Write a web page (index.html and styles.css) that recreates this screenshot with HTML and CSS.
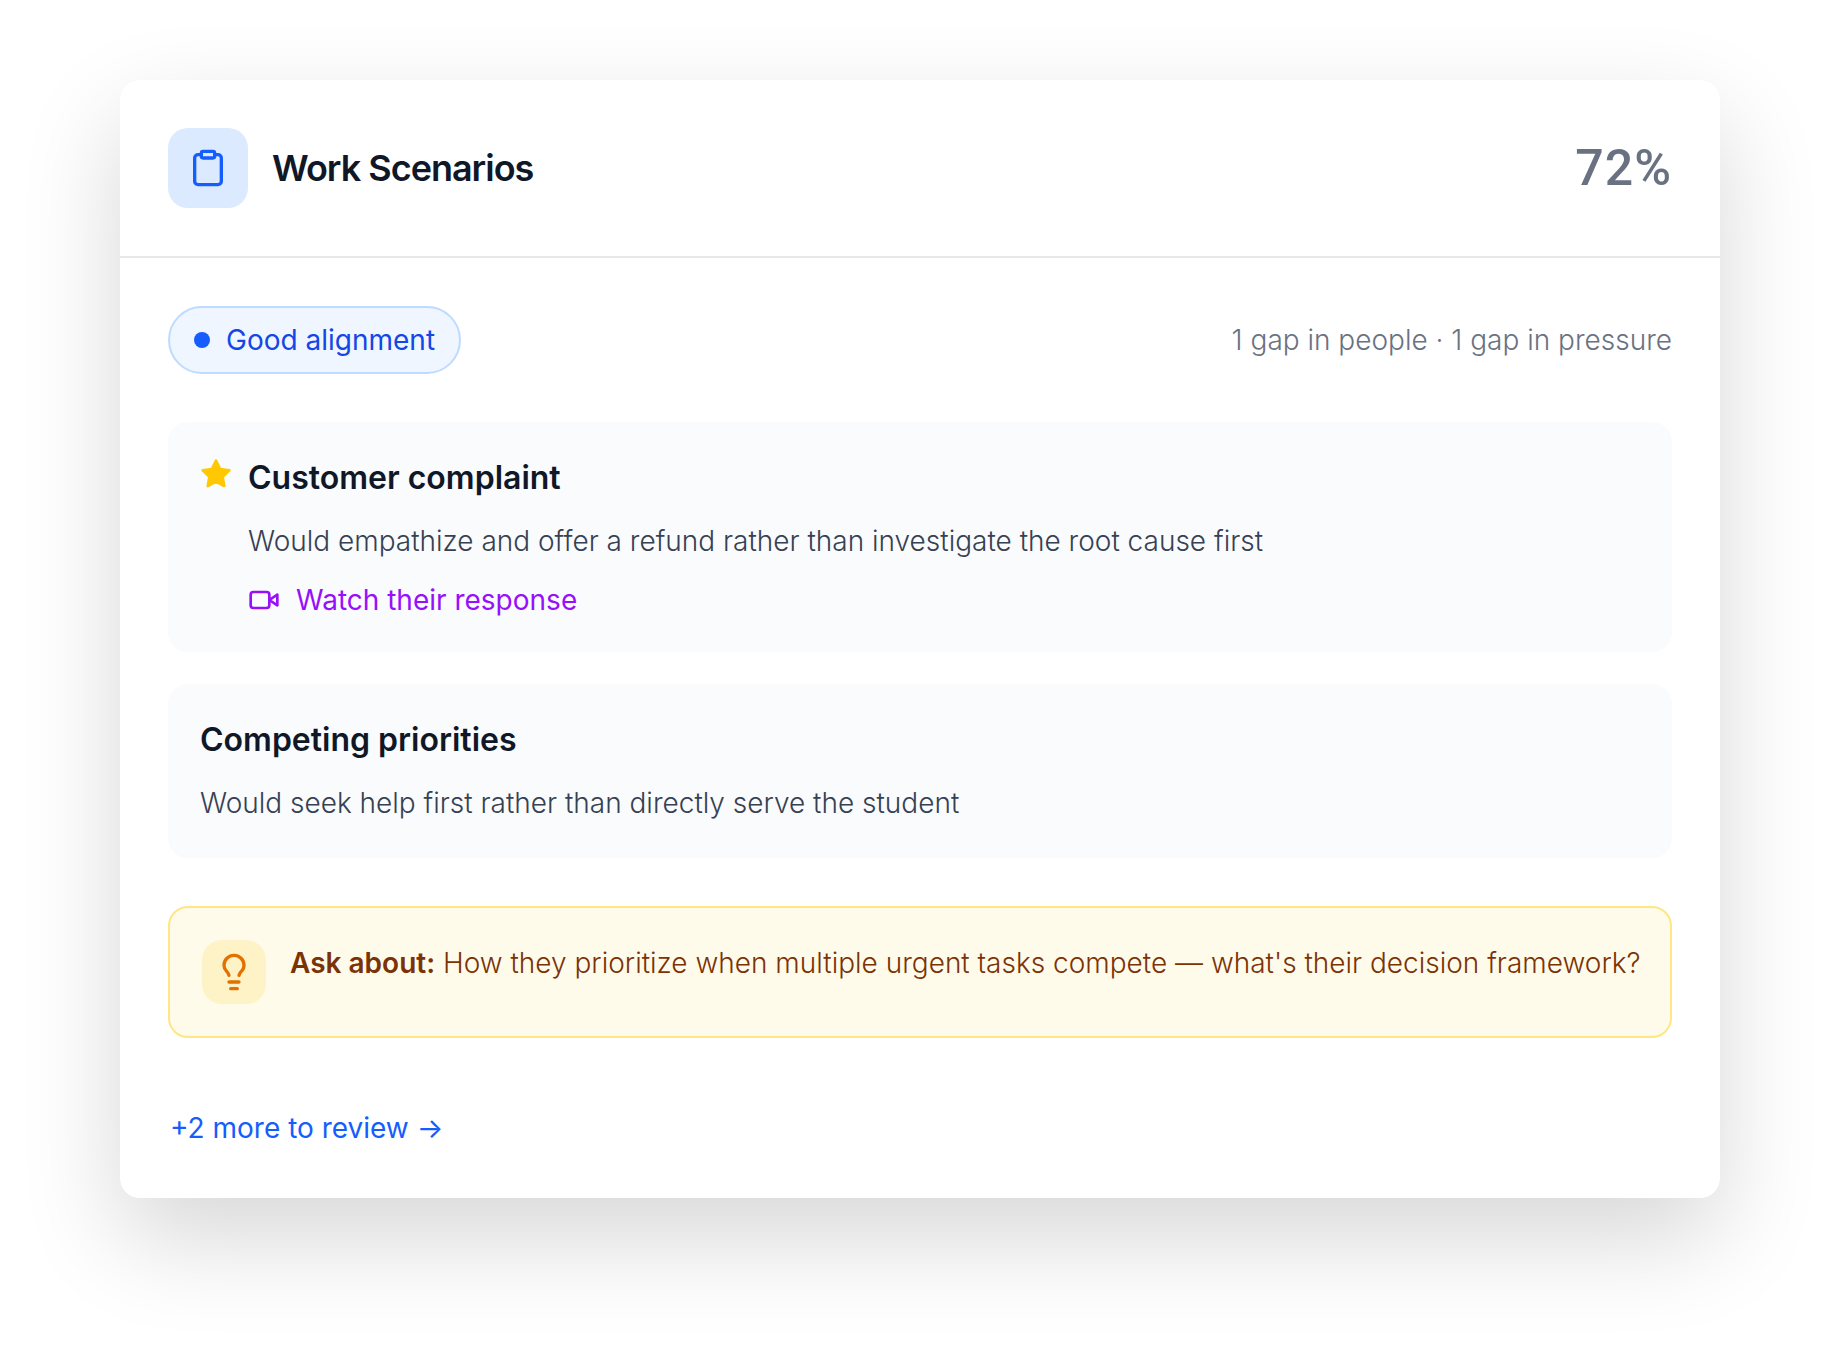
FILE: index.html
```html
<!DOCTYPE html>
<html lang="en">
<head>
<meta charset="utf-8">
<meta name="viewport" content="width=device-width, initial-scale=1">
<title>Work Scenarios</title>
<link rel="stylesheet" href="styles.css">
</head>
<body>
<main class="card">
  <header class="card-header">
    <span class="header-icon">
      <svg class="icon-clipboard" viewBox="0 0 24 24" aria-hidden="true">
        <rect x="8" y="2" width="8" height="4" rx="1"/>
        <path d="M16 4h2a2 2 0 0 1 2 2v14a2 2 0 0 1-2 2H6a2 2 0 0 1-2-2V6a2 2 0 0 1 2-2h2"/>
      </svg>
    </span>
    <h1 class="card-title">Work Scenarios</h1>
    <span class="score">72%</span>
  </header>

  <div class="card-body">
    <div class="summary">
      <span class="badge"><span class="badge-dot"></span>Good alignment</span>
      <p class="gaps">1 gap in people · 1 gap in pressure</p>
    </div>

    <div class="scenarios">
      <section class="scenario">
        <svg class="icon-star" viewBox="0 0 24 24" aria-hidden="true">
          <polygon points="12 2 15.09 8.26 22 9.27 17 14.14 18.18 21.02 12 17.77 5.82 21.02 7 14.14 2 9.27 8.91 8.26 12 2"/>
        </svg>
        <div class="scenario-content">
          <h2 class="scenario-title">Customer complaint</h2>
          <p class="scenario-text">Would empathize and offer a refund rather than investigate the root cause first</p>
          <a class="watch-link" href="#response">
            <svg class="icon-video" viewBox="0 0 24 24" aria-hidden="true">
              <path d="m22 8-6 4 6 4V8Z"/>
              <rect x="2" y="6" width="14" height="12" rx="2"/>
            </svg>
            Watch their response
          </a>
        </div>
      </section>

      <section class="scenario">
        <div class="scenario-content">
          <h2 class="scenario-title">Competing priorities</h2>
          <p class="scenario-text">Would seek help first rather than directly serve the student</p>
        </div>
      </section>
    </div>

    <aside class="tip">
      <span class="tip-icon">
        <svg class="icon-bulb" viewBox="0 0 24 24" aria-hidden="true">
          <path d="M15 14c.2-1 .7-1.7 1.5-2.5 1-.9 1.5-2.2 1.5-3.5A6 6 0 0 0 6 8c0 1 .2 2.2 1.5 3.5.7.7 1.3 1.5 1.5 2.5"/>
          <path d="M9 18h6"/>
          <path d="M10 22h4"/>
        </svg>
      </span>
      <p class="tip-text"><strong>Ask about:</strong> How they prioritize when multiple urgent tasks compete — what's their decision framework?</p>
    </aside>

    <a class="more-link" href="#review">+2 more to review →</a>
  </div>
</main>
</body>
</html>
```

FILE: styles.css
```css
* {
  box-sizing: border-box;
}

body {
  min-height: 100vh;
  margin: 0;
  padding: 80px 120px;
  background: #fff;
  font-family: Inter, "Liberation Sans", sans-serif;
  font-size: 28px;
  font-weight: 300;
  line-height: 40px;
  color: #101828;
}

h1,
h2,
p {
  margin: 0;
}

svg {
  display: block;
  flex: none;
  fill: none;
  stroke: currentColor;
  stroke-width: 2;
  stroke-linecap: round;
  stroke-linejoin: round;
}

.card {
  border-radius: 20px;
  background: #fff;
  box-shadow: 0 40px 100px rgba(0, 0, 0, 0.16);
}

.card-header {
  display: flex;
  align-items: center;
  gap: 24px;
  padding: 48px;
  border-bottom: 2px solid #e5e7eb;
}

.header-icon {
  display: flex;
  align-items: center;
  justify-content: center;
  width: 80px;
  height: 80px;
  border-radius: 20px;
  background: #dbeafe;
  color: #155dfc;
}

.icon-clipboard {
  width: 40px;
  height: 40px;
}

.card-title {
  flex: 1;
  font-size: 36px;
  font-weight: 600;
  line-height: 56px;
  letter-spacing: -1px;
}

.score {
  font-family: Roboto, Inter, sans-serif;
  font-size: 50px;
  font-weight: 500;
  line-height: 64px;
  letter-spacing: 1px;
  color: #6a7282;
}

.card-body {
  padding: 48px;
}

.summary {
  display: flex;
  align-items: center;
  justify-content: space-between;
  gap: 24px;
  margin-bottom: 48px;
}

.badge {
  display: flex;
  align-items: center;
  gap: 16px;
  padding: 12px 24px;
  border: 2px solid #bedbff;
  border-radius: 34px;
  background: #eff6ff;
  font-weight: 400;
  color: #1447e6;
}

.badge-dot {
  width: 16px;
  height: 16px;
  border-radius: 50%;
  background: #155dfc;
}

.gaps {
  color: #6a7282;
}

.scenarios {
  display: flex;
  flex-direction: column;
  gap: 32px;
  margin-bottom: 48px;
}

.scenario {
  display: flex;
  gap: 16px;
  padding: 32px;
  border-radius: 20px;
  background: #fafbfd;
}

.icon-star {
  width: 32px;
  height: 32px;
  margin-top: 4px;
  fill: currentColor;
  color: #ffc800;
}

.scenario-content {
  flex: 1;
}

.scenario-title {
  margin-bottom: 16px;
  font-size: 32px;
  font-weight: 600;
  line-height: 48px;
}

.scenario-text {
  line-height: 46px;
  color: #364153;
}

.watch-link {
  display: flex;
  align-items: center;
  gap: 16px;
  width: fit-content;
  margin-top: 16px;
  font-weight: 400;
  color: #9810fa;
  text-decoration: none;
}

.icon-video {
  width: 32px;
  height: 32px;
}

.tip {
  display: flex;
  align-items: flex-start;
  gap: 24px;
  padding: 32px 24px 32px 32px;
  border: 2px solid #fee685;
  border-radius: 20px;
  background: #fffbeb;
}

.tip-icon {
  display: flex;
  flex: none;
  align-items: center;
  justify-content: center;
  width: 64px;
  height: 64px;
  border-radius: 20px;
  background: #fef3c6;
  color: #e17100;
}

.icon-bulb {
  width: 40px;
  height: 40px;
}

.tip-text {
  line-height: 46px;
  color: #7b3306;
}

.tip-text strong {
  font-weight: 600;
}

.more-link {
  display: block;
  width: fit-content;
  margin-top: 68px;
  border: 2px solid transparent;
  font-weight: 400;
  color: #155dfc;
  text-decoration: none;
}
```
